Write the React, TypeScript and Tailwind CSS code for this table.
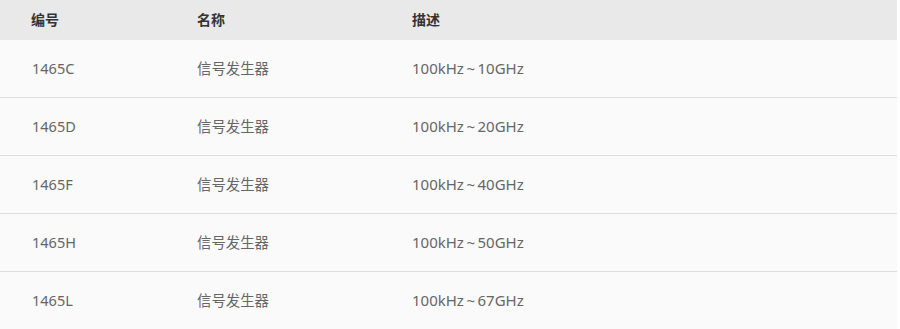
import React from "react";

const rows = [
  ["1465C", "信号发生器", "100kHz\u2009~\u200910GHz"],
  ["1465D", "信号发生器", "100kHz\u2009~\u200920GHz"],
  ["1465F", "信号发生器", "100kHz\u2009~\u200940GHz"],
  ["1465H", "信号发生器", "100kHz\u2009~\u200950GHz"],
  ["1465L", "信号发生器", "100kHz\u2009~\u200967GHz"],
];

export default function App() {
  return (
    <div
      className="w-[897px] bg-[#fafafa] text-[14px]"
      style={{ fontFamily: '"Noto Sans", "Noto Sans CJK SC", sans-serif' }}
    >
      <div className="grid h-[40px] grid-cols-[197px_215px_1fr] items-center bg-[#e9e9e9] pb-[2px] font-bold text-[#333]">
        <div className="pl-[31px]">编号</div>
        <div>名称</div>
        <div>描述</div>
      </div>
      {rows.map((r, i) => (
        <div
          key={r[0]}
          className={
            i < rows.length - 1
              ? "grid h-[58px] grid-cols-[197px_215px_1fr] items-center border-b border-[#dedede] text-[#666]"
              : "grid h-[57px] grid-cols-[197px_215px_1fr] items-center text-[#666]"
          }
        >
          <div className="pl-[32px] text-[14.5px]">{r[0]}</div>
          <div className="text-[14.4px]">{r[1]}</div>
          <div className="text-[15px]">{r[2]}</div>
        </div>
      ))}
    </div>
  );
}
